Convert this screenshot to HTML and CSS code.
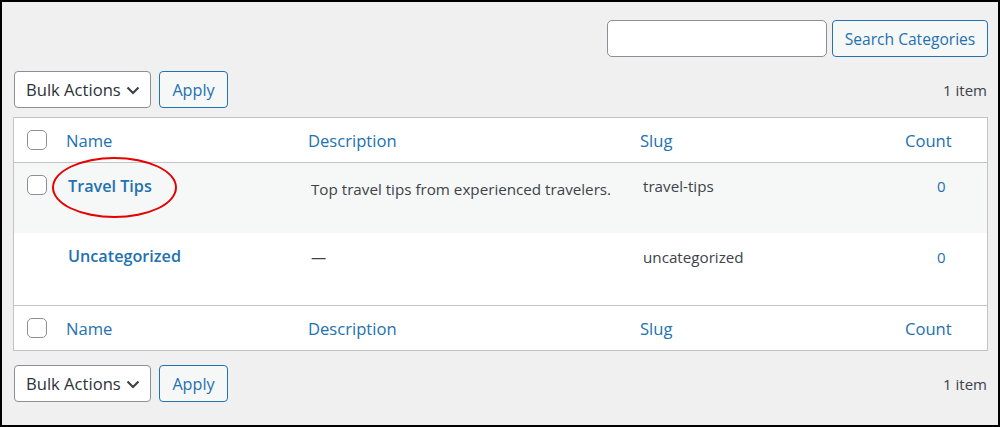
FILE: index.html
```html
<!DOCTYPE html>
<html>
<head>
<meta charset="utf-8">
<link rel="stylesheet" href="styles.css">
</head>
<body>
<div class="frame">
  <div class="search-box">
    <input class="search-input" type="text">
    <button class="btn">Search Categories</button>
  </div>

  <div class="tablenav top">
    <div class="bulk">
      <div class="select">Bulk Actions
        <svg class="chev" width="14" height="9" viewBox="0 0 14 9"><path d="M1.5 1.5 L7 7 L12.5 1.5" fill="none" stroke="#3c434a" stroke-width="2.2"/></svg>
      </div>
      <button class="btn apply">Apply</button>
    </div>
    <div class="count">1 item</div>
  </div>

  <div class="table">
    <div class="row head">
      <div class="cell cb"><span class="checkbox"></span></div>
      <div class="cell name">Name</div>
      <div class="cell desc">Description</div>
      <div class="cell slug">Slug</div>
      <div class="cell posts">Count</div>
    </div>
    <div class="row item alt">
      <div class="cell cb"><span class="checkbox"></span></div>
      <div class="cell name"><span class="title">Travel Tips</span><span class="ellipse"></span></div>
      <div class="cell desc">Top travel tips from experienced travelers.</div>
      <div class="cell slug">travel-tips</div>
      <div class="cell posts"><span class="num">0</span></div>
    </div>
    <div class="row item item2">
      <div class="cell cb"></div>
      <div class="cell name"><span class="title">Uncategorized</span></div>
      <div class="cell desc dash">—</div>
      <div class="cell slug">uncategorized</div>
      <div class="cell posts"><span class="num">0</span></div>
    </div>
    <div class="row head foot">
      <div class="cell cb"><span class="checkbox"></span></div>
      <div class="cell name">Name</div>
      <div class="cell desc">Description</div>
      <div class="cell slug">Slug</div>
      <div class="cell posts">Count</div>
    </div>
  </div>

  <div class="tablenav bottom">
    <div class="bulk">
      <div class="select">Bulk Actions
        <svg class="chev" width="14" height="9" viewBox="0 0 14 9"><path d="M1.5 1.5 L7 7 L12.5 1.5" fill="none" stroke="#3c434a" stroke-width="2.2"/></svg>
      </div>
      <button class="btn apply">Apply</button>
    </div>
    <div class="count">1 item</div>
  </div>
</div>
</body>
</html>
```

FILE: styles.css
```css
* { box-sizing: border-box; }
html, body { margin: 0; padding: 0; }
body {
  font-family: "Open Sans", "Noto Sans", sans-serif;
  color: #3c434a;
}
.frame {
  width: 1000px;
  height: 427px;
  border: 2px solid #000;
  background: #f0f0f1;
  padding: 0 10px 0 11px;
  overflow: hidden;
}
.search-box {
  display: flex;
  justify-content: flex-end;
  gap: 5px;
  margin-top: 18px;
}
.search-input {
  width: 220px;
  height: 37px;
  border: 1px solid #8c8f94;
  border-radius: 5px;
  background: #fff;
  margin: 0;
  padding: 0;
}
.btn {
  height: 37px;
  border: 1px solid #2271b1;
  border-radius: 4px;
  background: #f6f7f7;
  color: #2271b1;
  font-family: "Open Sans", "Noto Sans", sans-serif;
  font-size: 15.6px;
  padding: 0;
  margin: 0;
  width: 156px;
}
.tablenav {
  display: flex;
  justify-content: space-between;
  align-items: center;
  height: 37px;
  padding-left: 1px;
  padding-right: 1px;
}
.tablenav.top { margin-top: 14px; margin-bottom: 9px; }
.tablenav.bottom { margin-top: 14px; }
.bulk { display: flex; gap: 8px; align-items: center; }
.select {
  width: 137px;
  height: 37px;
  border: 1px solid #8c8f94;
  border-radius: 4px;
  background: #fff;
  display: flex;
  align-items: center;
  justify-content: space-between;
  padding: 0 10px 0 11px;
  font-size: 16.6px;
  color: #2c3338;
}
.chev { margin-top: 1px; }
.btn.apply { width: 69px; font-size: 16.2px; }
.count { font-size: 15px; color: #3c434a; }
.table {
  background: #fff;
  border: 1px solid #c3c4c7;
  width: 975px;
}
.row {
  display: grid;
  grid-template-columns: 42px 242px 332px 230px 1fr;
}
.row.head { height: 45px; align-items: center; border-bottom: 1px solid #c3c4c7; }
.row.head.foot { border-bottom: none; border-top: 1px solid #c3c4c7; height: 45px; }
.head .cell { color: #2271b1; font-size: 16.6px; padding-left: 10px; }
.cell.cb { padding-left: 13px; display: flex; align-items: center; }
.checkbox {
  display: block;
  width: 20px;
  height: 20px;
  border: 1px solid #8c8f94;
  border-radius: 5px;
  background: #fff;
}
.row.item { height: 70px; align-items: start; }
.row.item2 { height: 72px; }
.row.alt { background: #f6f7f7; }
.item .cell { padding: 10px 0 0 13px; font-size: 15.2px; line-height: 24px; color: #3c434a; }
.item .cell.cb { padding: 12px 0 0 13px; }
.item .cell.name { position: relative; padding-top: 11px; padding-left: 12px; }
.title { color: #2271b1; font-weight: 600; font-size: 16.2px; }
.item .cell.desc { padding-top: 14px; }
.item .cell.desc.dash { padding-top: 12px; }
.item .cell.slug { padding-top: 11px; }
.item2 .cell.slug { padding-top: 12px; }
.head .cell.posts { padding-left: 45px; }
.item .cell.posts { padding-left: 77px; padding-top: 11px; }
.item2 .cell.posts { padding-top: 12px; }
.num { color: #2271b1; font-size: 15px; }
.ellipse {
  position: absolute;
  left: -4px;
  top: -6px;
  width: 125px;
  height: 61px;
  border: 2px solid #e60000;
  border-radius: 50%;
}
```
